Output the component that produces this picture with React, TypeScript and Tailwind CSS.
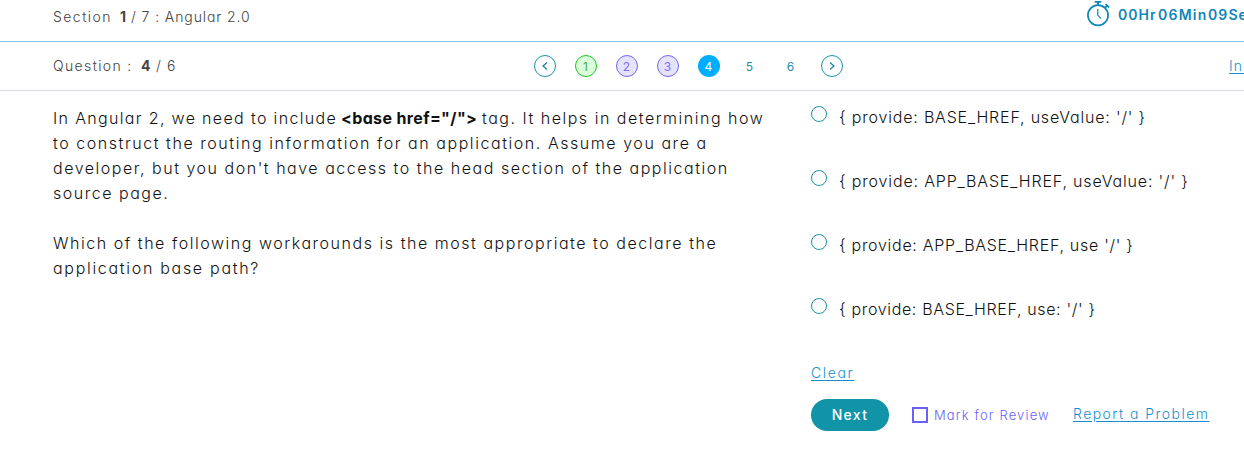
import React from "react";

const options = [
  { text: "{ provide: BASE_HREF, useValue: '/' }", spacing: "tracking-[0.81px]" },
  { text: "{ provide: APP_BASE_HREF, useValue: '/' }", spacing: "tracking-[0.835px]" },
  { text: "{ provide: APP_BASE_HREF, use '/' }", spacing: "tracking-[0.71px]" },
  { text: "{ provide: BASE_HREF, use: '/' }", spacing: "tracking-[0.654px]" },
];

const pages = [
  { n: 1, style: "border border-[#1fc71f] bg-[#dbffdb] text-[#3fae4f]" },
  { n: 2, style: "border border-[#7265f5] bg-[#e6e3ff] text-[#7b70f0]" },
  { n: 3, style: "border border-[#7265f5] bg-[#e6e3ff] text-[#7b70f0]" },
  { n: 4, style: "bg-[#00aeff] text-white font-medium" },
  { n: 5, style: "text-[#2c8fa3]" },
  { n: 6, style: "text-[#2c8fa3]" },
];

function Stopwatch() {
  return (
    <svg className="shrink-0" width="24" height="27" viewBox="0 0 24 27" fill="none" stroke="#0f86b8" strokeWidth="1.7">
      <circle cx="11" cy="15.2" r="10.1" />
      <path d="M7.7 1.9h6.6M18.6 4l3.6 3.4" />
      <path d="M11 2V5M18.2 7.6l2.2-2.2" strokeWidth="2" />
      <path d="M10.8 9v6.3l3.4 3.4" strokeWidth="1.2" />
    </svg>
  );
}

function Arrow({ d }: { d: string }) {
  return (
    <button className="flex size-[22px] items-center justify-center rounded-full border border-[#1795a9]">
      <svg className="-mt-px" width="8" height="10" viewBox="0 0 8 10" fill="none" stroke="#1c7f96" strokeWidth="1.2">
        <path d={d} />
      </svg>
    </button>
  );
}

export default function App() {
  return (
    <div className="h-[463px] w-full overflow-hidden bg-white font-['Inter','Liberation_Sans',sans-serif] font-light text-[#111] [font-feature-settings:'cv11']">
      <header className="flex h-[42px] items-start justify-between border-b border-[#78cbea] pl-[53px] text-sm text-[#444]">
        <div className="flex whitespace-pre pt-[7px]">
          <span className="w-[67px] tracking-[1.45px]">Section</span>
          <b className="w-[11px] font-bold">1</b>
          <span className="tracking-[0.9px]">/ 7 : Angular 2.0</span>
        </div>
        <div className="flex w-[157px] shrink-0 overflow-hidden whitespace-nowrap font-semibold text-[#0f86b8]">
          <Stopwatch />
          <span className="ml-[7px] w-10 shrink-0 pt-[5px] tracking-[1.009px]">00Hr</span>
          <span className="w-[50px] shrink-0 pt-[5px] tracking-[1.257px]">06Min</span>
          <span className="shrink-0 pt-[5px] tracking-[1.1px]">09Sec</span>
        </div>
      </header>

      <nav className="flex h-[49px] items-center border-b border-[#d9d9e8] pl-[53px] text-sm text-[#444]">
        <div className="flex w-[481px] shrink-0 whitespace-pre">
          <span className="w-[88px] tracking-[1.36px]">Question :</span>
          <b className="w-[15px] font-bold">4</b>
          <span className="tracking-[1.1px]">/ 6</span>
        </div>
        <div className="flex items-center gap-[19px]">
          <Arrow d="M6 1.5L2 5l4 3.5" />
          {pages.map((p) => (
            <button key={p.n} className={`flex size-[22px] items-center justify-center rounded-full pr-px pt-px text-xs font-normal ${p.style}`}>
              {p.n}
            </button>
          ))}
          <Arrow d="M2 1.5L6 5 2 8.5" />
        </div>
        <a className="ml-[386px] w-[15px] shrink-0 overflow-hidden whitespace-nowrap text-sm tracking-[1.2px] text-[#168fd0] underline underline-offset-2">
          Instructions
        </a>
      </nav>

      <main className="flex pl-[53px]">
        <section className="w-[758px] shrink-0 whitespace-pre pt-[15px] text-base leading-[25px]">
          <p className="flex">
            <span className="w-[288px] tracking-[1.34px]">In Angular 2, we need to include</span>
            <b className="w-[141px] font-bold tracking-[0.36px]">{'<base href="/">'}</b>
            <span className="tracking-[1.51px]">tag. It helps in determining how</span>
          </p>
          <p className="tracking-[1.555px]">to construct the routing information for an application. Assume you are a</p>
          <p className="tracking-[1.52px]">developer, but you don't have access to the head section of the application</p>
          <p className="tracking-[1.52px]">source page.</p>
          <p className="mt-[25px] tracking-[1.54px]">Which of the following workarounds is the most appropriate to declare the</p>
          <p className="tracking-[1.7px]">application base path?</p>
        </section>

        <section className="pt-[14px]">
          {options.map((o) => (
            <label key={o.text} className="flex h-16 items-start whitespace-pre text-base leading-[25px]">
              <span className="mr-3 mt-px size-4 rounded-full border border-[#1795a9]" />
              <span className={o.spacing}>{o.text}</span>
            </label>
          ))}
          <a className="mt-[2px] block h-9 text-sm leading-5 tracking-[1.65px] text-[#168fd0] underline underline-offset-2">Clear</a>
          <div className="flex h-8 items-center whitespace-nowrap">
            <button className="h-8 w-[78px] rounded-full bg-[#1193a8] text-sm font-medium tracking-[1.335px] text-white">Next</button>
            <span className="ml-[23px] size-4 border-2 border-[#6a5ff8]" />
            <span className="ml-[6px] w-[139px] pt-px text-[13px] tracking-[1.15px] text-[#6a5ff8]">Mark for Review</span>
            <a className="-mt-[2px] text-sm tracking-[1.45px] text-[#168fd0] underline underline-offset-2">Report a Problem</a>
          </div>
        </section>
      </main>
    </div>
  );
}
